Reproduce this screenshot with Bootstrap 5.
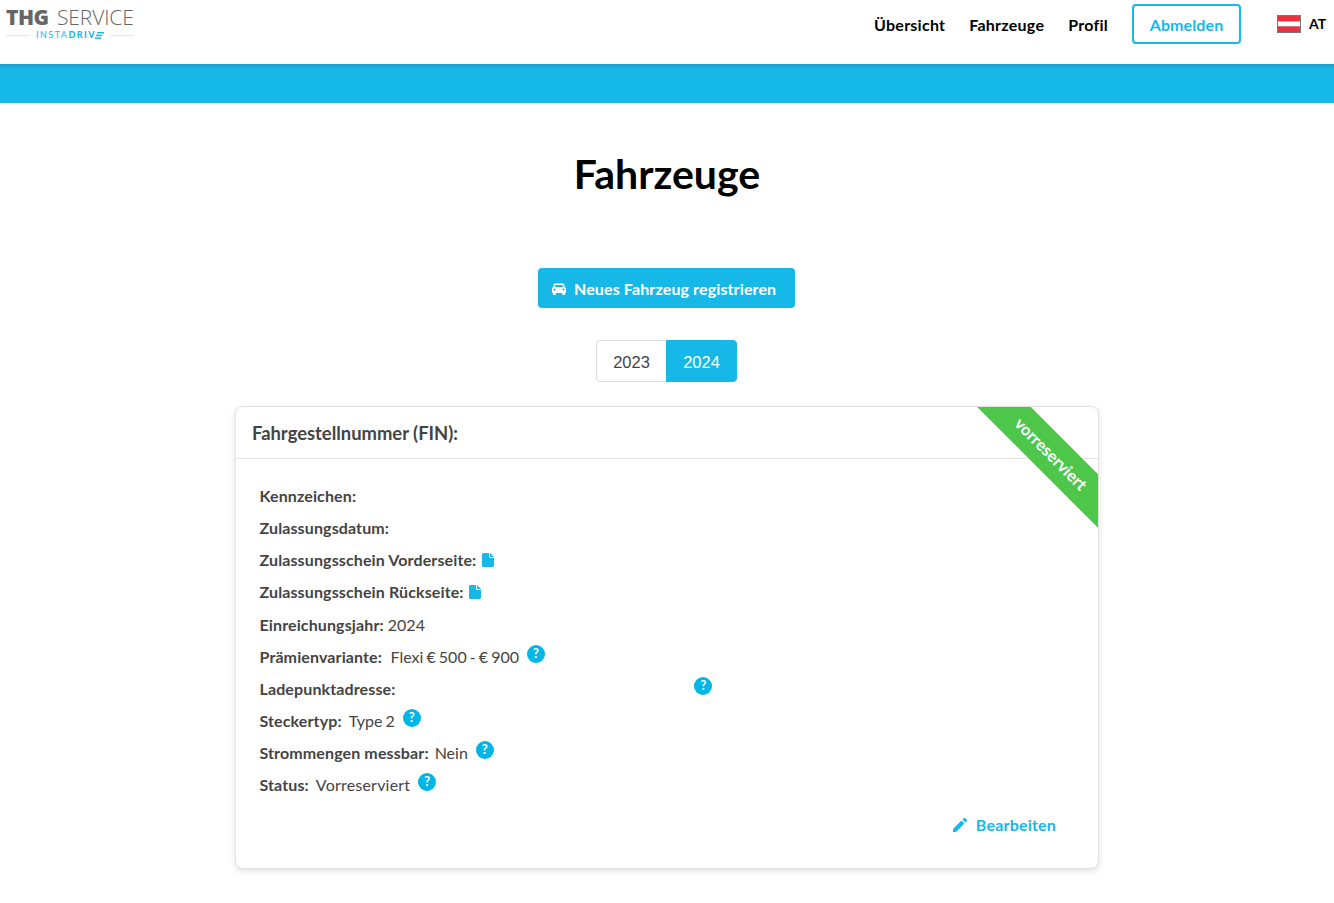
<!DOCTYPE html>
<html lang="de">
<head>
<meta charset="utf-8">
<title>Fahrzeuge</title>
<link href="https://cdn.jsdelivr.net/npm/bootstrap@5.3.0/dist/css/bootstrap.min.css" rel="stylesheet">
<style>
body{font-family:Lato,"Liberation Sans",sans-serif;color:#444;background:#fff;font-size:16px}
.top-head{height:64px;background:#fff;position:relative}
.brand-box{width:134px;padding-left:6px;line-height:1}
.brand-main{font-family:"Open Sans",sans-serif;font-size:21px;color:#666;font-weight:300;white-space:nowrap;height:18px;margin-top:7px;line-height:20px;letter-spacing:-.1px}
.brand-main b{font-weight:800;color:#666;letter-spacing:-.5px;margin-right:3px}
.brand-sub{font-size:9px;color:#16b8e8;letter-spacing:1.45px;margin-top:5px;line-height:10px;white-space:nowrap;gap:6px}
.brand-sub b{font-weight:900}
.brand-rule{flex:1;height:1px;background:#c9eefa}
.speed{margin-left:-1px;vertical-align:-1px}
.mainnav{gap:24px;padding-top:0}
.mainnav a{color:#000;font-weight:700;font-size:16px;letter-spacing:.25px;padding-top:2px;text-decoration:none}
.mainnav a.btn-logout{border:2px solid #16b8e8;color:#16b8e8;border-radius:4px;width:109px;height:40px;display:flex;align-items:center;justify-content:center;letter-spacing:.1px}
.lang{width:93px;padding-left:36px;color:#000;font-weight:700;font-size:14px}
.flag-at{width:24px;height:18px;display:block;margin-right:8px;margin-top:1px}
.band{height:39px;background:linear-gradient(#1b9fc8,#16b8e8 5px)}
.page-title{font-size:41px;font-weight:700;color:#000;text-align:center;margin:0;line-height:48px;padding-top:47px}
.btn-reg{background:#16b8e8;color:#fff;font-weight:700;font-size:16px;letter-spacing:.12px;width:257px;height:40px;border-radius:4px;border:0;margin:70px 1px 0 0;display:flex;align-items:center;justify-content:flex-start;padding:2px 0 0 14px;gap:8px}
.btn-reg:hover{background:#16b8e8;color:#fff}
.yrs{margin:32px 1px 0 0;height:42px}
.yrs .btn{font-family:"Liberation Sans",sans-serif;font-size:16.5px;color:#444;height:42px;width:71px;padding:0;border-color:#ddd;line-height:43px;border-radius:4px}
.yrs .btn.on{background:#16b8e8;border-color:#16b8e8;color:#fff;width:71px}
.veh{width:864px;height:463px;margin:24px auto 34px;border:1px solid #e2e2e2;border-radius:8px;box-shadow:0 2px 6px rgba(0,0,0,.12);position:relative;overflow:hidden;background:#fff}
.veh-head{height:52px;border-bottom:1px solid #e2e2e2;padding:2px 16px 0;display:flex;align-items:center;font-size:18.4px;font-weight:700;color:#444}
.veh-body{padding:21px 24px 0 23.5px}
.rowline{height:32.1px;line-height:32px;font-size:16px;white-space:nowrap;display:flex;align-items:center}
.rowline b{font-weight:700;color:#444;letter-spacing:.12px}
.row-year{padding-top:2px}
.gap-s{margin-left:7px}
.gap-t{margin-left:6px}
.val-flexi{word-spacing:-1px;margin-left:8.500px}
.val-type{word-spacing:-1px}
.val-status{letter-spacing:.2px}
.qm{width:18px;height:18px;border-radius:50%;background:#00b6e6;color:#fff;font-size:13px;font-weight:700;display:inline-flex;align-items:center;justify-content:center;line-height:1;margin-left:8px;transform:translateY(-3px)}
.addr-q{margin-left:299px}
.docico{margin-left:5px}
.doc-front{margin-left:6px}
.edit-line{display:flex;justify-content:flex-end;padding-right:18px;margin-top:12px}
.edit-line a{color:#16b8e8;font-weight:700;text-decoration:none;font-size:16px;letter-spacing:.2px;display:flex;align-items:center;gap:9px}
.ribbon-wrap{position:absolute;top:0;right:0;width:121px;height:121px;overflow:hidden}
.ribbon{position:absolute;left:-26px;top:28px;width:200px;height:38px;transform:rotate(45deg);background:#4ec64a;color:#fff;font-weight:700;font-size:16.4px;text-align:center;line-height:38px}
</style>
</head>
<body>
<header class="top-head d-flex justify-content-between">
  <div class="brand-box">
    <div class="brand-main"><b>THG</b> SERVICE</div>
    <div class="brand-sub d-flex align-items-center"><span class="brand-rule"></span><span>INSTA<b>DRIV</b><svg class="speed" width="9" height="7" viewBox="0 0 9 7" fill="#16b8e8"><rect x="2" width="7" height="1.500"/><rect x="1" y="2.700" width="6" height="1.500"/><rect y="5.400" width="6" height="1.500"/></svg></span><span class="brand-rule"></span></div>
  </div>
  <div class="d-flex align-items-start">
    <nav class="d-flex align-items-center mainnav" style="height:48px">
      <a href="#">Übersicht</a>
      <a href="#">Fahrzeuge</a>
      <a href="#">Profil</a>
      <a href="#" class="btn-logout">Abmelden</a>
    </nav>
    <div class="lang d-flex align-items-center" style="height:47px">
      <svg class="flag-at" viewBox="0 0 24 18"><rect width="24" height="18" fill="#777"/><rect x="1" y="1" width="22" height="5.5" fill="#ee2f3e"/><rect x="1" y="6.5" width="22" height="5" fill="#fff"/><rect x="1" y="11.5" width="22" height="5.5" fill="#ee2f3e"/></svg>
      <span>AT</span>
    </div>
  </div>
</header>
<div class="band"></div>
<h1 class="page-title">Fahrzeuge</h1>
<div class="d-flex justify-content-center">
  <a href="#" class="btn btn-reg">
    <svg width="14" height="12" viewBox="0 0 14 12" fill="#fff"><path d="M3 .5h8c.5 0 .9.3 1 .8L12.800 4c.7.3 1.200 1 1.200 1.800V9.500c0 .3-.2.5-.5.5H13v1c0 .5-.4 1-1 1h-.8c-.5 0-1-.5-1-1v-1H3.800v1c0 .5-.4 1-1 1H2c-.6 0-1-.5-1-1v-1H.5c-.3 0-.5-.2-.5-.5V5.800C0 5 .5 4.300 1.200 4L2 1.300C2.100.8 2.500.5 3 .5zM3.300 2L2.700 4h8.600l-.6-2zM2.500 5.500a1 1 0 100 2.200 1 1 0 000-2.200zm9 0a1 1 0 100 2.200 1 1 0 000-2.200z" fill-rule="evenodd"/></svg>
    Neues Fahrzeug registrieren
  </a>
</div>
<div class="d-flex justify-content-center yrs">
  <div class="btn-group" role="group">
    <button class="btn btn-outline-secondary bg-white" type="button">2023</button>
    <button class="btn on" type="button">2024</button>
  </div>
</div>
<section class="veh">
  <div class="veh-head">Fahrgestellnummer (FIN):</div>
  <div class="ribbon-wrap"><div class="ribbon">vorreserviert</div></div>
  <div class="veh-body">
    <div class="rowline"><b>Kennzeichen:</b></div>
    <div class="rowline"><b>Zulassungsdatum:</b></div>
    <div class="rowline"><b>Zulassungsschein Vorderseite:</b>
      <svg class="docico doc-front" width="12" height="14" viewBox="0 0 12 14"><path fill="#16b8e8" d="M1.500 0H7v3.500c0 .8.700 1.500 1.500 1.500H12v7.500c0 .8-.7 1.500-1.500 1.500h-9C.7 14 0 13.300 0 12.500v-11C0 .7.700 0 1.500 0zM8 0l4 4H8.500C8.200 4 8 3.800 8 3.500z"/></svg></div>
    <div class="rowline"><b>Zulassungsschein Rückseite:</b>
      <svg class="docico" width="12" height="14" viewBox="0 0 12 14"><path fill="#16b8e8" d="M1.500 0H7v3.500c0 .8.700 1.500 1.500 1.500H12v7.500c0 .8-.7 1.500-1.500 1.500h-9C.7 14 0 13.300 0 12.500v-11C0 .7.700 0 1.500 0zM8 0l4 4H8.500C8.200 4 8 3.800 8 3.500z"/></svg></div>
    <div class="rowline row-year"><b>Einreichungsjahr:</b><span>&nbsp;2024</span></div>
    <div class="rowline"><b>Prämienvariante:</b><span class="val-flexi">Flexi € 500 - € 900</span><span class="qm">?</span></div>
    <div class="rowline"><b>Ladepunktadresse:</b><span class="qm addr-q">?</span></div>
    <div class="rowline"><b>Steckertyp:</b><span class="gap-s val-type">Type 2</span><span class="qm">?</span></div>
    <div class="rowline"><b>Strommengen messbar:</b><span class="gap-t">Nein</span><span class="qm">?</span></div>
    <div class="rowline"><b>Status:</b><span class="gap-s val-status">Vorreserviert</span><span class="qm">?</span></div>
    <div class="edit-line"><a href="#">
      <svg width="14" height="14" viewBox="0 0 14 14" fill="#16b8e8"><path d="M0 14V11L8.500 2.500l3 3L3 14zM9.500 1.500 10.600.4c.5-.5 1.300-.5 1.800 0l1.200 1.200c.5.500.5 1.300 0 1.800L12.500 4.500z"/></svg>
      Bearbeiten</a></div>
  </div>
</section>
<script src="https://cdn.jsdelivr.net/npm/bootstrap@5.3.0/dist/js/bootstrap.bundle.min.js"></script>
</body>
</html>
